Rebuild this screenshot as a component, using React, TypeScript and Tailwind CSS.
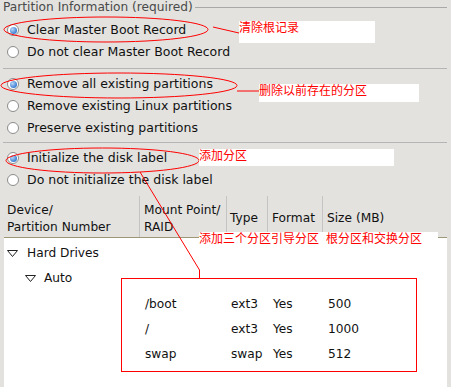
import React from 'react'

const FONT = "font-['DejaVu_Sans',sans-serif]"
const CJK = "font-['Noto_Sans_CJK_SC','Noto_Sans',sans-serif]"

function Radio({ label, checked }: { label: string; checked?: boolean }) {
  return (
    <div className="flex h-[22px] items-center pl-[7px]">
      <span className="flex h-[12px] w-[12px] items-center justify-center rounded-full border border-[#8c8c8c] bg-white">
        {checked && <span className="h-[7px] w-[7px] rounded-full bg-[radial-gradient(circle_at_35%_35%,#b9d6f5,#3b7fd4_70%)]" />}
      </span>
      <span className="ml-[8px] pt-px text-[12.5px] leading-none text-[#111]">{label}</span>
    </div>
  )
}

function Sep() {
  return <div className="ml-[3px] mr-[4px] h-px bg-[#b4b4b4]" />
}

function Triangle() {
  return (
    <svg width="11" height="7" viewBox="0 0 11 7" className="shrink-0">
      <polygon points="0.5,0.5 10.5,0.5 5.5,6.5" fill="none" stroke="#222" strokeWidth="1" />
    </svg>
  )
}

const cols = 'grid grid-cols-[135px_87px_41px_55px_1fr]'

const parts = [
  { mount: '/boot', type: 'ext3', fmt: 'Yes', size: '500' },
  { mount: '/', type: 'ext3', fmt: 'Yes', size: '1000' },
  { mount: 'swap', type: 'swap', fmt: 'Yes', size: '512' },
]

export default function App() {
  return (
    <div className={`relative h-[387px] w-[451px] overflow-hidden bg-[#e3e2df] ${FONT}`}>
      {/* Legend */}
      <div className="flex h-[19px] items-start">
        <div className="flex h-[14px] w-full items-center">
          <span className="pl-[3px] text-[12.2px] leading-none text-[#4a4a4a]">Partition Information (required)</span>
          <div className="ml-[2px] mr-[4px] h-px flex-1 bg-[#a8a8a8]" />
        </div>
      </div>

      {/* MBR */}
      <Radio label="Clear Master Boot Record" checked />
      <Radio label="Do not clear Master Boot Record" />
      <div className="h-[5px]" />
      <Sep />
      <div className="h-[4px]" />

      {/* Partitions */}
      <Radio label="Remove all existing partitions" checked />
      <Radio label="Remove existing Linux partitions" />
      <Radio label="Preserve existing partitions" />
      <div className="h-[3px]" />
      <Sep />
      <div className="h-[4px]" />

      {/* Disk label */}
      <Radio label="Initialize the disk label" checked />
      <Radio label="Do not initialize the disk label" />
      <div className="h-[5px]" />

      {/* Table */}
      <div className="ml-[4px] mr-[4px]">
        <div className={`${cols} h-[42px] border-b border-[#9d9777] text-[12.2px] leading-[17px] text-[#111]`}>
          <div className="flex flex-col justify-center pl-[3px] pt-[4px]">
            <span>Device/</span>
            <span>Partition Number</span>
          </div>
          <div className="flex flex-col justify-center border-l border-[#c4c4c4] pl-[4px] pt-[4px]">
            <span>Mount Point/</span>
            <span>RAID</span>
          </div>
          <div className="flex items-center border-l border-[#c4c4c4] pl-[3px] pt-[4px]">Type</div>
          <div className="flex items-center border-l border-[#c4c4c4] pl-[4px] pt-[4px]">Format</div>
          <div className="flex items-center border-l border-[#c4c4c4] pl-[4px] pt-[4px]">Size (MB)</div>
        </div>

        <div className="h-[200px] bg-white pt-[3px] text-[12.2px] leading-none text-[#111]">
          <div className="flex h-[25px] items-center gap-[9px] pl-[3px]">
            <Triangle />
            <span>Hard Drives</span>
          </div>
          <div className="flex h-[25px] items-center gap-[8px] pl-[21px]">
            <Triangle />
            <span>Auto</span>
          </div>
          <div className="h-[1px]" />
          {parts.map((p) => (
            <div key={p.mount} className={`${cols} h-[25px] items-center`}>
              <div />
              <div className="pl-[6px]">{p.mount}</div>
              <div className="pl-[5px]">{p.type}</div>
              <div className="pl-[6px]">{p.fmt}</div>
              <div className="pl-[6px]">{p.size}</div>
            </div>
          ))}
        </div>
      </div>

      {/* Annotations */}
      <svg className="pointer-events-none absolute left-0 top-0" width="451" height="387" viewBox="0 0 451 387">
        <g fill="none" stroke="#ff0000" strokeWidth="1">
          <ellipse cx="106" cy="29.5" rx="102" ry="12.5" />
          <line x1="213" y1="27" x2="239" y2="33" />
          <ellipse cx="119" cy="85.5" rx="118" ry="12.5" />
          <line x1="237" y1="91" x2="259" y2="91" />
          <ellipse cx="102.5" cy="160.5" rx="96.5" ry="12.5" />
          <polyline points="140,172 199.5,270 199.5,278" />
          <rect x="121.5" y="278.5" width="295" height="93" />
        </g>
      </svg>

      <div className={`absolute left-[239px] top-[21px] h-[22px] w-[136px] bg-white ${CJK} text-[12px] leading-[12px] text-[#ff0000]`}>
        清除根记录
      </div>
      <div className={`absolute left-[259px] top-[84px] h-[18px] w-[160px] bg-white ${CJK} text-[12px] leading-[12px] text-[#ff0000]`}>
        删除以前存在的分区
      </div>
      <div className={`absolute left-[199px] top-[149px] h-[17px] w-[195px] bg-white ${CJK} text-[12px] leading-[12px] text-[#ff0000]`}>
        添加分区
      </div>
      <div className={`absolute left-[199px] top-[232px] flex h-[13px] w-[239px] bg-white ${CJK} text-[12px] leading-[12px] text-[#ff0000]`}>
        <span>添加三个分区引导分区</span>
        <span className="ml-[7px]">根分区和交换分区</span>
      </div>
    </div>
  )
}
